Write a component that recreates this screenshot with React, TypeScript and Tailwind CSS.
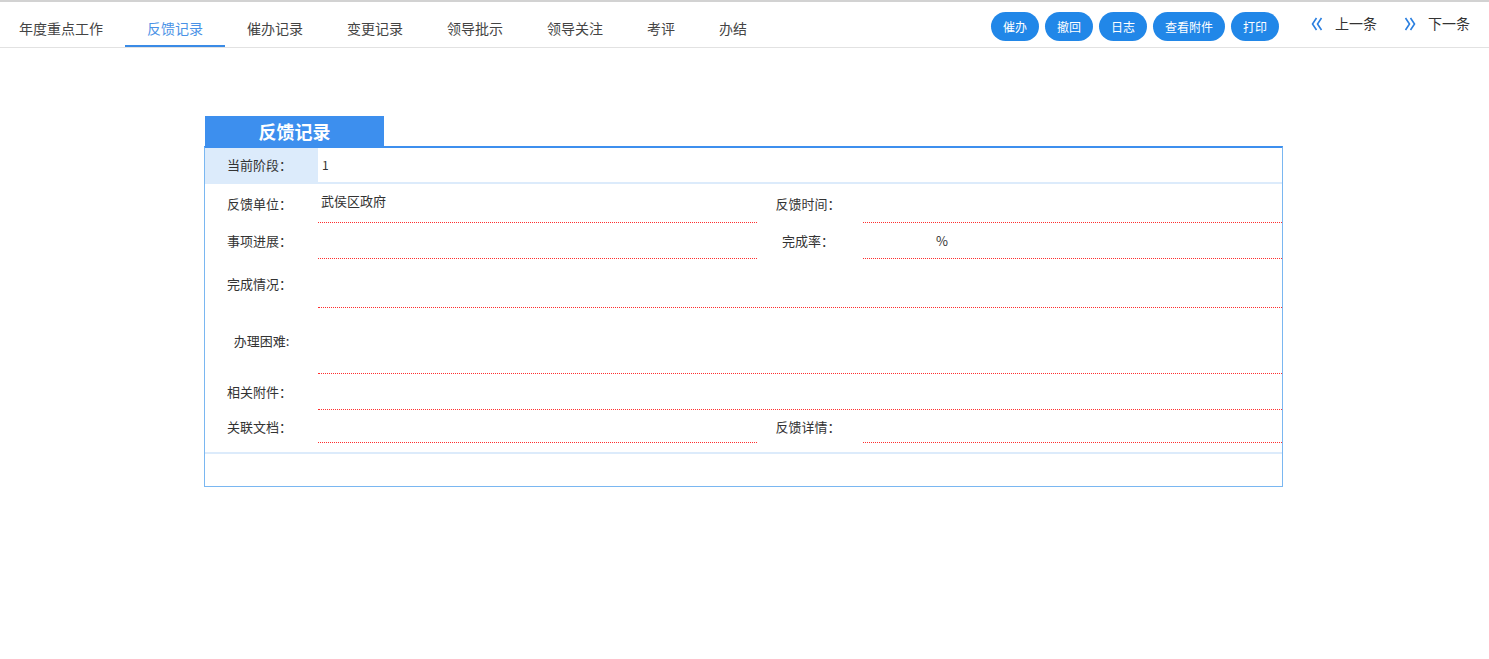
import React from "react";

const tabs = ["年度重点工作", "反馈记录", "催办记录", "变更记录", "领导批示", "领导关注", "考评", "办结"];
const buttons = ["催办", "撤回", "日志", "查看附件", "打印"];

const Chevrons = ({ dir }: { dir: "left" | "right" }) => (
    <svg width="12" height="14" viewBox="0 0 12 14" fill="none" stroke="#2a7fe0" strokeWidth="1.6">
        {dir === "left" ? (
            <>
                <polyline points="5.5,1 1.5,7 5.5,13" />
                <polyline points="10.5,1 6.5,7 10.5,13" />
            </>
        ) : (
            <>
                <polyline points="1.5,1 5.5,7 1.5,13" />
                <polyline points="6.5,1 10.5,7 6.5,13" />
            </>
        )}
    </svg>
);

const Label = ({ text, className = "" }: { text: string; className?: string }) => (
    <div className={`flex items-center justify-center text-[13px] text-[#333] ${className}`}>{text}</div>
);

const Value = ({ children, className = "" }: { children?: React.ReactNode; className?: string }) => (
    <div className={`flex items-center pl-[3px] text-[13px] text-[#333] border-b border-dotted border-[#ff2e2e] ${className}`}>
        {children}
    </div>
);

export default function App() {
    return (
        <div className="w-[1489px] h-[659px] bg-white border-t-2 border-[#d2d2d2] font-['Noto_Sans_CJK_SC','Noto_Sans',sans-serif] overflow-hidden">
            <div className="flex items-stretch h-[46px] border-b border-[#e2e2e2]">
                <div className="flex items-stretch -ml-[3px]">
                    {tabs.map((t, i) => (
                        <div
                            key={t}
                            className={`flex items-center px-[22px] pt-[9px] border-b-2 text-[14px] ${
                                i === 1 ? "border-[#3a8be6] text-[#4a92e6]" : "border-transparent text-[#444]"
                            }`}
                        >
                            {t}
                        </div>
                    ))}
                </div>
                <div className="ml-auto flex items-center gap-[6px] pt-[4px]">
                    {buttons.map((b) => (
                        <button
                            key={b}
                            className="h-[29px] px-[12px] rounded-full bg-[#2187e8] text-white text-[12px] leading-none"
                        >
                            {b}
                        </button>
                    ))}
                </div>
                <div className="flex items-center ml-[32px] mr-[19px] pb-[2px] text-[14px] text-[#333]">
                    <Chevrons dir="left" />
                    <span className="ml-[12px]">上一条</span>
                    <span className="ml-[27px]"><Chevrons dir="right" /></span>
                    <span className="ml-[12px]">下一条</span>
                </div>
            </div>

            <div className="ml-[204px] mt-[68px] w-[1079px]">
                <div className="ml-[1px] w-[179px] h-[30px] bg-[#3d8fee] text-white text-[18px] font-bold flex items-center justify-center">
                    反馈记录
                </div>
                <div className="border border-[#7ab7f1] border-t-2 border-t-[#3d8fee]">
                    <div className="flex h-[36px] border-b-2 border-[#dcebfb]">
                        <Label text="当前阶段：" className="w-[113px] bg-[#dcebfb] pr-[4px]" />
                        <div className="flex items-center pl-[4px] text-[12px] text-[#333]">1</div>
                    </div>
                    <div className="grid grid-cols-[113px_439px_106px_419px]">
                        <Label text="反馈单位：" className="h-[39px] pr-[4px]" />
                        <Value className="h-[39px] pb-[5px]">武侯区政府</Value>
                        <Label text="反馈时间：" className="h-[39px] pr-[4px]" />
                        <Value className="h-[39px]" />

                        <Label text="事项进展：" className="h-[36px] pr-[4px]" />
                        <Value className="h-[36px]" />
                        <Label text="完成率：" className="h-[36px] pr-[4px]" />
                        <Value className="h-[36px]">
                            <span className="ml-[70px]">%</span>
                        </Value>

                        <Label text="完成情况：" className="h-[49px] pr-[4px]" />
                        <Value className="h-[49px] col-span-3" />

                        <Label text="办理困难:" className="h-[66px]" />
                        <Value className="h-[66px] col-span-3" />

                        <Label text="相关附件：" className="h-[36px] pr-[4px]" />
                        <Value className="h-[36px] col-span-3" />

                        <Label text="关联文档：" className="h-[33px] pr-[4px]" />
                        <Value className="h-[33px]" />
                        <Label text="反馈详情：" className="h-[33px] pr-[4px]" />
                        <Value className="h-[33px]" />
                    </div>
                    <div className="h-[11px] border-b-2 border-[#dcebfb]" />
                    <div className="h-[32px]" />
                </div>
            </div>
        </div>
    );
}
